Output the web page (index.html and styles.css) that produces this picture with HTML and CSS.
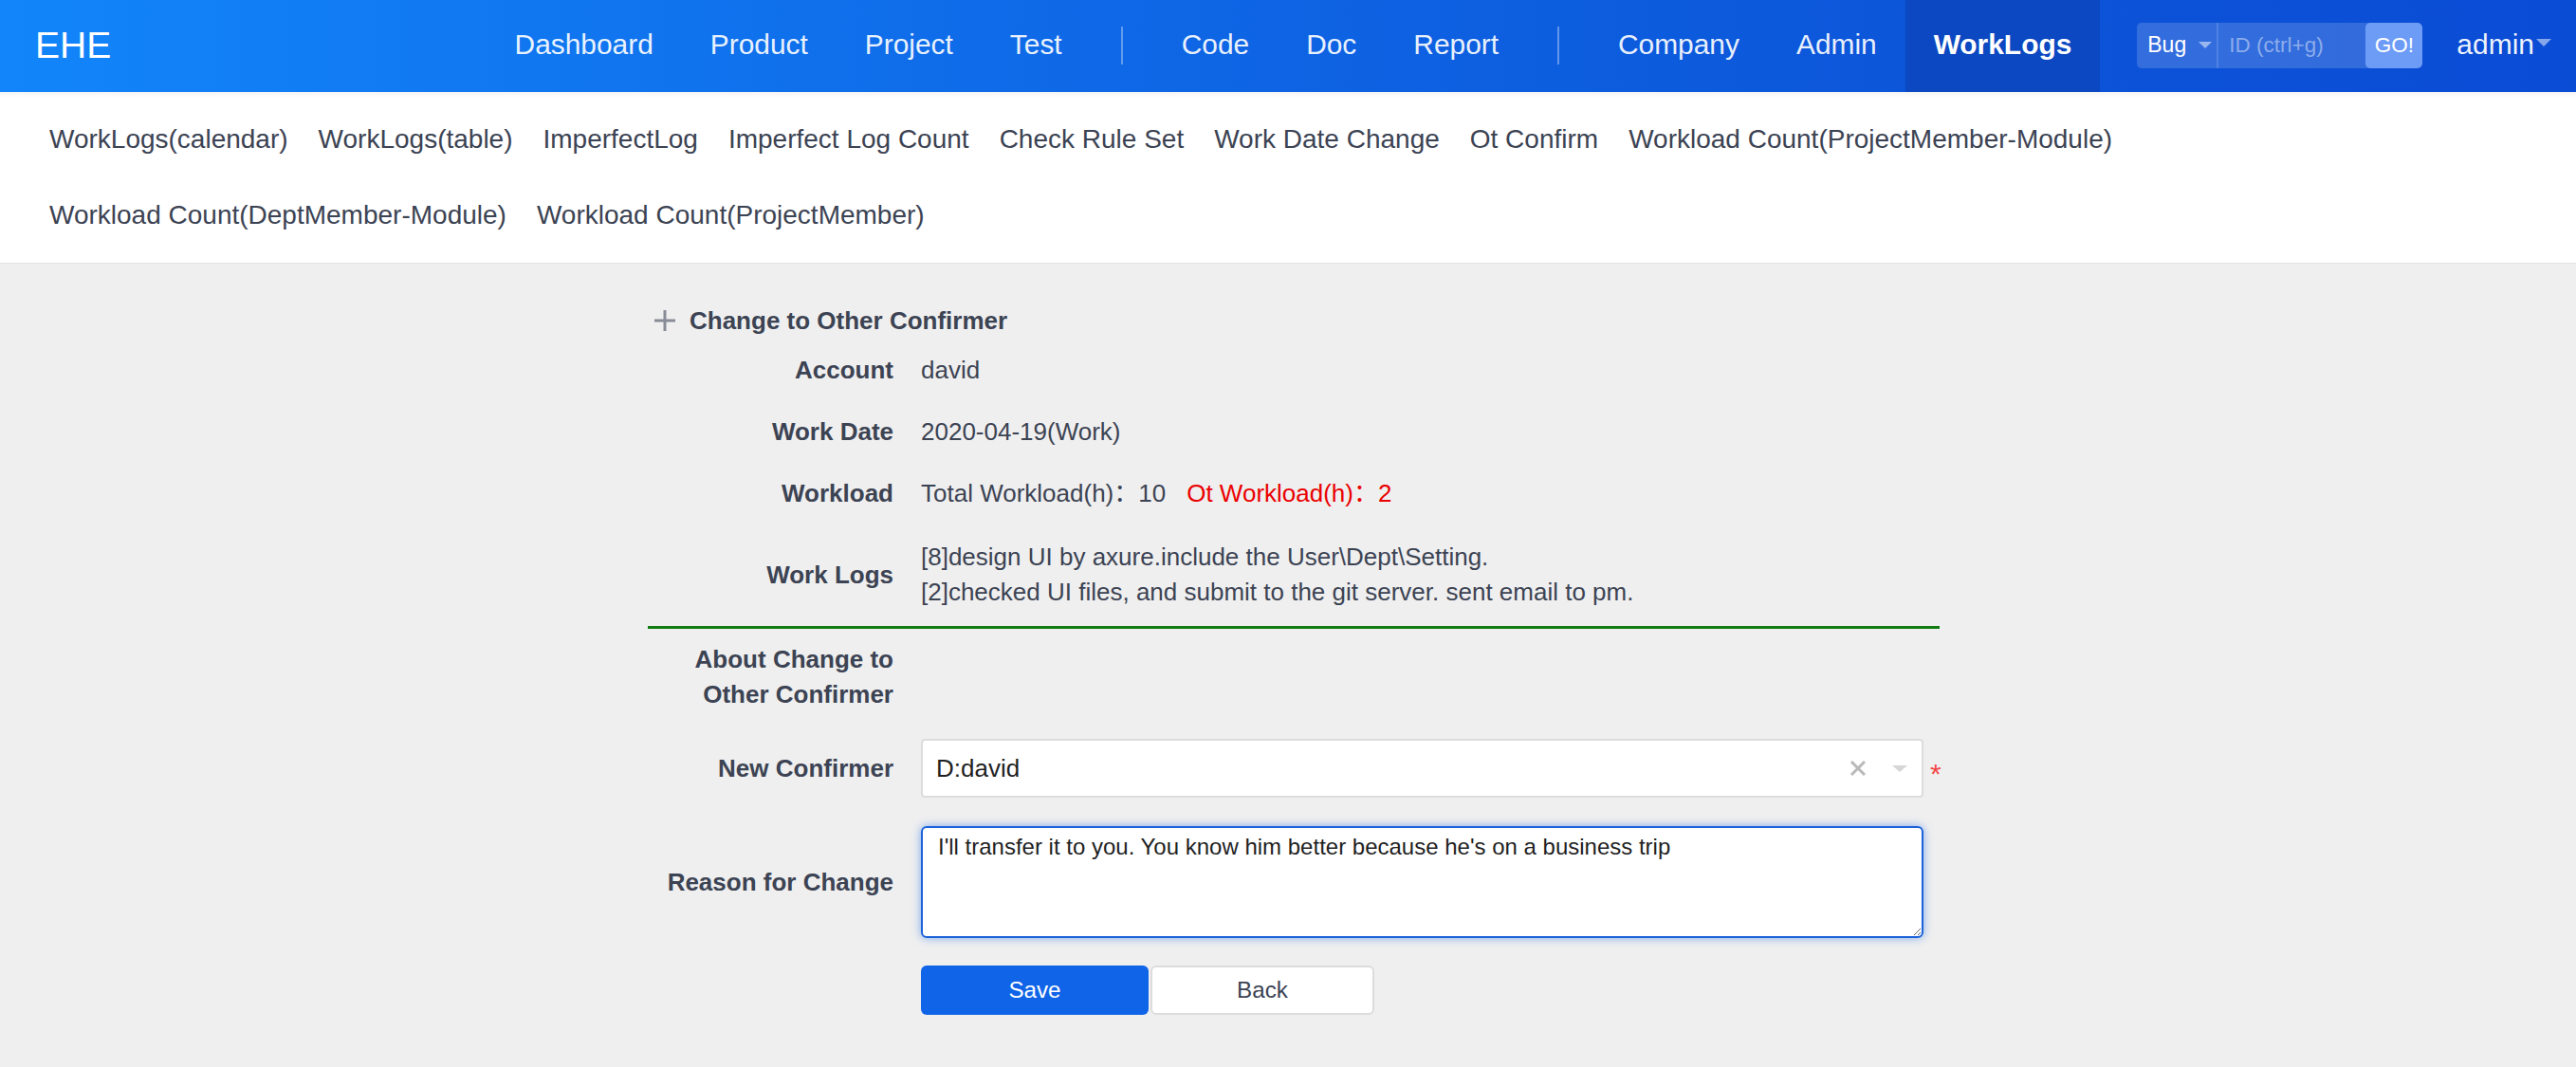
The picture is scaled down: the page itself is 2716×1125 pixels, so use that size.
FILE: index.html
```html
<!DOCTYPE html>
<html lang="en">
<head>
<meta charset="utf-8">
<title>WorkLogs - Change to Other Confirmer</title>
<link rel="stylesheet" href="styles.css">
</head>
<body>
<header class="topbar">
  <div class="logo">EHE</div>
  <nav class="mainnav">
    <a href="#">Dashboard</a>
    <a href="#">Product</a>
    <a href="#">Project</a>
    <a href="#">Test</a>
    <span class="sep"></span>
    <a href="#">Code</a>
    <a href="#">Doc</a>
    <a href="#">Report</a>
    <span class="sep"></span>
    <a href="#">Company</a>
    <a href="#">Admin</a>
    <a href="#" class="active">WorkLogs</a>
  </nav>
  <div class="search">
    <div class="search-type"><span>Bug</span><span class="caret caret-sm"></span></div>
    <input class="search-input" type="text" placeholder="ID (ctrl+g)">
    <button class="go" type="button">GO!</button>
  </div>
  <div class="user"><span>admin</span><span class="caret caret-lg"></span></div>
</header>

<nav class="subnav">
  <a href="#">WorkLogs(calendar)</a>
  <a href="#">WorkLogs(table)</a>
  <a href="#">ImperfectLog</a>
  <a href="#">Imperfect Log Count</a>
  <a href="#">Check Rule Set</a>
  <a href="#">Work Date Change</a>
  <a href="#">Ot Confirm</a>
  <a href="#">Workload Count(ProjectMember-Module)</a>
  <a href="#">Workload Count(DeptMember-Module)</a>
  <a href="#">Workload Count(ProjectMember)</a>
</nav>

<main class="page">
  <section class="panel">
    <h2 class="panel-title">
      <svg class="plus" width="24" height="24" viewBox="0 0 24 24"><path d="M12 1v22M1 12h22" stroke="#878c97" stroke-width="3" fill="none"/></svg>
      <span>Change to Other Confirmer</span>
    </h2>

    <div class="row">
      <div class="label">Account</div>
      <div class="value">david</div>
    </div>
    <div class="row">
      <div class="label">Work Date</div>
      <div class="value">2020-04-19(Work)</div>
    </div>
    <div class="row">
      <div class="label">Workload</div>
      <div class="value">Total Workload(h)：10<span class="ot">Ot Workload(h)：2</span></div>
    </div>
    <div class="row row-logs">
      <div class="label">Work Logs</div>
      <div class="value">[8]design UI by axure.include the User\Dept\Setting.<br>[2]checked UI files, and submit to the git server. sent email to pm.</div>
    </div>

    <div class="row row-about">
      <div class="label">About Change to Other Confirmer</div>
      <div class="value"></div>
    </div>
    <div class="row row-select">
      <div class="label">New Confirmer</div>
      <div class="select">
        <span class="select-text">D:david</span>
        <svg class="clear" width="18" height="18" viewBox="0 0 18 18"><path d="M2 2l14 14M16 2L2 16" stroke="#b9b9b9" stroke-width="3" fill="none"/></svg>
        <span class="arrow"></span>
      </div>
      <span class="req">*</span>
    </div>
    <div class="row row-reason">
      <div class="label">Reason for Change</div>
      <textarea class="textarea">I'll transfer it to you. You know him better because he's on a business trip</textarea>
    </div>
    <div class="row row-actions">
      <div class="label"></div>
      <div class="actions">
        <button class="btn btn-primary" type="button">Save</button>
        <button class="btn btn-default" type="button">Back</button>
      </div>
    </div>
  </section>
</main>
</body>
</html>
```

FILE: styles.css
```css
html, body {
  margin: 0;
  padding: 0;
}
body {
  background: #efefef;
  font-family: "Liberation Sans", Arial, "Noto Sans CJK SC", sans-serif;
  color: #3c4353;
  min-height: 1125px;
}

/* ---------- top bar ---------- */
.topbar {
  display: flex;
  align-items: stretch;
  height: 97px;
  box-sizing: border-box;
  padding: 0 26px 0 37px;
  background: linear-gradient(90deg, #1285fa 0%, #0f6ae8 40%, #0c55d9 75%, #0b4cd5 100%);
  color: #fff;
}
.logo {
  display: flex;
  align-items: center;
  font-size: 39px;
  padding-bottom: 2px;
  color: #fff;
}
.mainnav {
  display: flex;
  align-items: stretch;
  margin-left: auto;
}
.mainnav a {
  display: flex;
  align-items: center;
  padding: 0 30px 3px;
  font-size: 29.9px;
  color: rgba(255, 255, 255, 0.93);
  text-decoration: none;
}
.mainnav a.active {
  background: #0b48c1;
  color: #fff;
  font-weight: bold;
}
.mainnav .sep {
  align-self: center;
  width: 2px;
  height: 40px;
  margin: 0 32px 2px;
  background: rgba(255, 255, 255, 0.35);
}

.search {
  align-self: center;
  display: flex;
  height: 48px;
  margin-left: 39px;
  margin-bottom: 2px;
  border-radius: 5px;
  overflow: hidden;
  background: rgba(255, 255, 255, 0.16);
  font-size: 23px;
}
.search-type {
  display: flex;
  align-items: center;
  gap: 13px;
  width: 86px;
  box-sizing: border-box;
  padding: 0 0 0 11px;
  border-right: 2px solid rgba(255, 255, 255, 0.14);
  color: #fff;
}
.search-input {
  width: 155px;
  box-sizing: border-box;
  padding: 0 11px;
  border: 0;
  background: transparent;
  font-family: inherit;
  font-size: 22.5px;
  color: #fff;
  outline: none;
}
.search-input::placeholder {
  color: rgba(255, 255, 255, 0.45);
}
.go {
  width: 60px;
  padding: 0;
  border: 0;
  border-radius: 5px;
  background: #6d9cf6;
  color: #fff;
  font-family: inherit;
  font-size: 22.5px;
}
.user {
  display: flex;
  align-items: center;
  gap: 2px;
  margin-left: 36px;
  padding-bottom: 3px;
  font-size: 30px;
  color: rgba(255, 255, 255, 0.95);
}
.caret {
  display: inline-block;
  width: 0;
  height: 0;
}
.caret-sm {
  border-left: 7px solid transparent;
  border-right: 7px solid transparent;
  border-top: 7px solid rgba(255, 255, 255, 0.5);
}
.caret-lg {
  border-left: 8.5px solid transparent;
  border-right: 8.5px solid transparent;
  border-top: 8px solid rgba(255, 255, 255, 0.5);
  margin-top: -4px;
}

/* ---------- sub nav ---------- */
.subnav {
  display: flex;
  flex-wrap: wrap;
  padding: 10px 36px 10px;
  background: #fff;
  border-bottom: 1px solid #e3e3e3;
  box-shadow: inset 0 7px 6px -6px rgba(0, 0, 0, 0.08);
}
.subnav a {
  padding: 0 16px;
  line-height: 80px;
  font-size: 28px;
  color: #3c4353;
  text-decoration: none;
}

/* ---------- panel ---------- */
.page {
  padding-top: 40.5px;
}
.panel {
  width: 1362px;
  margin-left: calc(50% - 675px);
}
.panel-title {
  display: flex;
  align-items: center;
  gap: 14px;
  height: 39px;
  margin: 0;
  padding-left: 6px;
  font-size: 26px;
  font-weight: bold;
  color: #3c4353;
}
.plus {
  display: block;
}

.row {
  display: grid;
  grid-template-columns: 288px 1057px auto;
  align-items: center;
  padding: 16px 0;
  font-size: 26px;
  line-height: 33px;
}
.label {
  text-align: right;
  padding-right: 29px;
  font-weight: bold;
  color: #3c4353;
}
.value {
  color: #3c4353;
}
.ot {
  margin-left: 22px;
  color: #ea0000;
}
.row-logs {
  border-bottom: 3px solid #0f7b10;
}
.row-logs .value {
  line-height: 37.5px;
}
.row-about {
  padding: 14px 0;
}
.row-about .label {
  line-height: 37px;
}
.row-select {
  padding: 14.5px 0 15px;
}
.select {
  display: flex;
  align-items: center;
  height: 62px;
  box-sizing: border-box;
  padding: 0 15px 0 14px;
  border: 2px solid #dcdcdc;
  border-radius: 4px;
  background: #fff;
  color: #1f1f1f;
}
.select-text {
  flex: 1;
}
.clear {
  display: block;
  margin-right: 27px;
}
.arrow {
  width: 0;
  height: 0;
  border-left: 8px solid transparent;
  border-right: 8px solid transparent;
  border-top: 7px solid #d6d6d6;
}
.req {
  margin-left: 7px;
  padding-top: 12px;
  font-size: 30px;
  line-height: 30px;
  color: #f2484a;
}
.row-reason {
  padding: 15px 0 14.5px;
}
.textarea {
  display: block;
  width: 1057px;
  height: 118px;
  margin: 0;
  box-sizing: border-box;
  padding: 7px 16px;
  border: 2px solid #1c62d9;
  border-radius: 6px;
  box-shadow: 0 0 10px rgba(30, 110, 235, 0.55);
  background: #fff;
  font-family: "Liberation Sans", Arial, sans-serif;
  font-size: 24px;
  line-height: 26px;
  color: #1f1f1f;
  outline: none;
  resize: both;
}
.row-actions {
  padding: 14px 0;
}
.actions {
  display: flex;
  gap: 2px;
}
.btn {
  height: 52px;
  box-sizing: border-box;
  border-radius: 6px;
  font-family: "Liberation Sans", Arial, sans-serif;
  font-size: 24.2px;
  cursor: pointer;
}
.btn-primary {
  width: 240px;
  border: 0;
  background: #0f64e7;
  color: #fff;
}
.btn-default {
  width: 236px;
  border: 2px solid #dcdcdc;
  background: #fff;
  color: #3c4353;
}
```
